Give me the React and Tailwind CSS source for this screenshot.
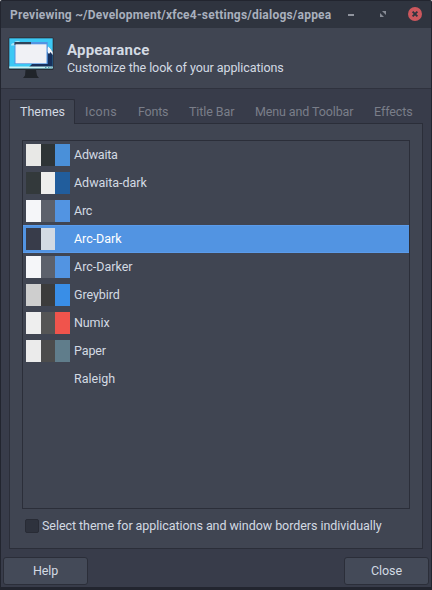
const themes = [
  { name: "Adwaita", a: "bg-[#e8e8e6]", b: "bg-[#2e3436]", c: "bg-[#4a90d9]", w: "tracking-[-0.25px]" },
  { name: "Adwaita-dark", a: "bg-[#33393b]", b: "bg-[#eeeeec]", c: "bg-[#215d9c]", w: "tracking-[-0.03px]" },
  { name: "Arc", a: "bg-[#f5f6f9]", b: "bg-[#5c616c]", c: "bg-[#5294e2]", w: "tracking-[-0.2px]" },
  { name: "Arc-Dark", a: "bg-[#383c4a]", b: "bg-[#d3dae3]", c: "bg-[#5294e2]", w: "tracking-[-0.05px]", selected: true },
  { name: "Arc-Darker", a: "bg-[#f5f6f9]", b: "bg-[#5c616c]", c: "bg-[#5294e2]", w: "tracking-[0px]" },
  { name: "Greybird", a: "bg-[#cecece]", b: "bg-[#3c3c3c]", c: "bg-[#398ee7]", w: "tracking-[-0.07px]" },
  { name: "Numix", a: "bg-[#eeeeee]", b: "bg-[#555555]", c: "bg-[#f0544c]", w: "tracking-[-0.1px]" },
  { name: "Paper", a: "bg-[#ebebeb]", b: "bg-[#4c4c4c]", c: "bg-[#607d8b]", w: "tracking-[-0.1px]" },
  { name: "Raleigh", w: "tracking-[0px]" },
];

const tabs = [
  { name: "Icons", w: "w-[53px] tracking-[0.3px]" },
  { name: "Fonts", w: "w-[51px] tracking-[-0.2px]" },
  { name: "Title Bar", w: "w-[66px] tracking-[-0.1px]" },
  { name: "Menu and Toolbar", w: "w-[119px] tracking-[-0.12px]" },
  { name: "Effects", w: "tracking-[-0.1px]" },
];

function DisplayIcon() {
  return (
    <svg className="h-11 w-12 shrink-0" viewBox="0 0 48 44">
      <rect x="0.5" y="0.5" width="45" height="32.5" rx="1.2" fill="#252b33" />
      <rect x="1.3" y="1.3" width="43.4" height="30" fill="#3cc8f4" />
      <path d="M3 8.5Q3 6 6 6Q7 3.5 10 4Q13 4 13 8.5Z" fill="#a5e7fb" />
      <path d="M21 30L29 22L37 14L40 10L42 11L44.7 15V31H21Z" fill="#17305c" />
      <path d="M38 12.5L40 9.5L42 11L44.7 15V18L42.5 15L41 17L39 14.5L37.5 16Z" fill="#f3f7fb" />
      <rect x="1.3" y="29.5" width="43.4" height="1.9" fill="#c9f3f4" />
      <path d="M37 30.4h1.5M40 30.4h1.5M42.5 30.4h1.2" stroke="#459aa8" />
      <rect x="6.5" y="5" width="33.2" height="22" fill="#5294e2" />
      <rect x="6.5" y="5" width="16.5" height="3" fill="#30435a" />
      <rect x="7.5" y="7.3" width="31" height="19" fill="#f0f1f5" />
      <path d="M17.5 33H28L29 38.5L31 41H15L17 38.5Z" fill="#20242a" />
    </svg>
  );
}

export default function App() {
  return (
    <div className="flex h-[590px] w-[432px] flex-col overflow-hidden rounded-t-[2px] border-x border-t border-b-[3px] border-[#22252f] bg-[#383c4a] font-['Roboto','Noto_Sans',sans-serif] text-[12.5px] whitespace-nowrap text-[#d3dae3]">
      <header className="flex h-[27px] shrink-0 items-center bg-[#2f343f] pl-[9px]">
        <span className="w-[322px] text-[12px] leading-[26px] font-bold tracking-[0.22px] text-[#a9b0bd]">
          Previewing ~/Development/xfce4-settings/dialogs/appea
        </span>
        <span className="ml-4 h-[2px] w-[6px] bg-[#90949e]" />
        <svg className="ml-[26px] size-[7px]" viewBox="0 0 7 7" fill="#878b95">
          <path d="M2 0H6V4ZM0 2V6H4Z" />
        </svg>
        <svg className="mb-px ml-[21px] size-[14px]" viewBox="0 0 14 14">
          <circle cx="7" cy="7" r="7" fill="#cc575d" />
          <path d="M4.6 4.6L9.4 9.4M9.4 4.6L4.6 9.4" stroke="#2f343f" strokeWidth="1.9" />
        </svg>
      </header>

      <section className="flex h-[61px] shrink-0 border-b border-[#2f323e] bg-[#404552] pt-[9px] pl-[7px]">
        <DisplayIcon />
        <div className="ml-[11px] pt-1">
          <h1 className="text-[15px] leading-[18px] font-bold tracking-[0.2px]">Appearance</h1>
          <p className="leading-[18px] tracking-[-0.07px]">Customize the look of your applications</p>
        </div>
      </section>

      <main className="flex grow flex-col px-2 pt-[10px]">
        <nav className="relative z-10 -mb-px flex h-[25px] shrink-0 leading-[24px] text-[#7a7e89]">
          <div className="w-[66px] shrink-0 rounded-t-[2px] border border-b-0 border-[#2b2e39] bg-[#404552] pl-[10px] tracking-[0px] text-[#d3dae3]">
            Themes
          </div>
          <div className="flex pl-[10px] leading-[26px]">
            {tabs.map((t) => (
              <div key={t.name} className={`shrink-0 ${t.w}`}>{t.name}</div>
            ))}
          </div>
        </nav>

        <div className="flex h-[426px] w-[414px] shrink-0 flex-col border border-[#2b2e39] bg-[#404552] px-3 pt-4">
          <div className="h-[369px] shrink-0 border border-[#2b2e39]">
            {themes.map((t) => (
              <div
                key={t.name}
                className={`flex h-7 items-center pl-[3px] ${t.selected ? "border-y border-[#5b9bea] bg-[#5294e2] text-white" : ""}`}
              >
                <div className="flex h-[22px] w-11">
                  <span className={`w-[15px] ${t.a || ""}`} />
                  <span className={`w-[14px] ${t.b || ""}`} />
                  <span className={`w-[15px] ${t.c || ""}`} />
                </div>
                <span className={`ml-1 leading-[18px] ${t.w}`}>{t.name}</span>
              </div>
            ))}
          </div>
          <label className="mt-[7px] flex items-center pl-[3px] leading-[18px]">
            <span className="size-[14px] rounded-[2px] border border-[#282b35] bg-[#2e323d]" />
            <span className="ml-[3px] pt-px tracking-[-0.055px]">Select theme for applications and window borders individually</span>
          </label>
        </div>
      </main>

      <footer className="flex h-[31px] shrink-0 justify-between px-[2px] pt-px">
        <button className="h-7 w-[85px] rounded-[3px] border border-[#2b2e39] bg-[#444a58] tracking-[-0.1px]">Help</button>
        <button className="h-7 w-[85px] rounded-[3px] border border-[#2b2e39] bg-[#444a58] tracking-[-0.1px]">Close</button>
      </footer>
    </div>
  );
}
